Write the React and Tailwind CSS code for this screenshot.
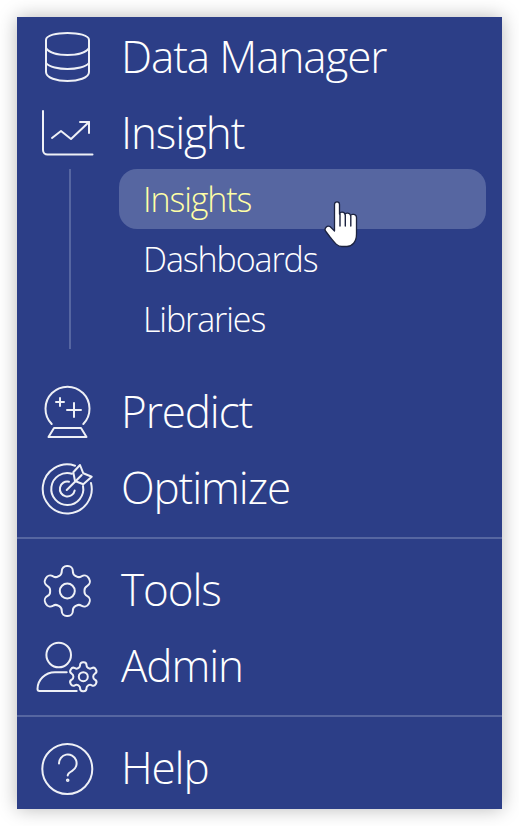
const gearPath = "M12.22 2h-.44a2 2 0 0 0-2 2v.18a2 2 0 0 1-1 1.73l-.43.25a2 2 0 0 1-2 0l-.15-.08a2 2 0 0 0-2.73.73l-.22.38a2 2 0 0 0 .73 2.73l.15.1a2 2 0 0 1 1 1.72v.51a2 2 0 0 1-1 1.74l-.15.09a2 2 0 0 0-.73 2.73l.22.38a2 2 0 0 0 2.73.73l.15-.08a2 2 0 0 1 2 0l.43.25a2 2 0 0 1 1 1.73V20a2 2 0 0 0 2 2h.44a2 2 0 0 0 2-2v-.18a2 2 0 0 1 1-1.73l.43-.25a2 2 0 0 1 2 0l.15.08a2 2 0 0 0 2.73-.73l.22-.39a2 2 0 0 0-.73-2.73l-.15-.08a2 2 0 0 1-1-1.74v-.5a2 2 0 0 1 1-1.74l.15-.09a2 2 0 0 0 .73-2.73l-.22-.38a2 2 0 0 0-2.73-.73l-.15.08a2 2 0 0 1-2 0l-.43-.25a2 2 0 0 1-1-1.73V4a2 2 0 0 0-2-2z";

function Icon({ children }) {
  return (
    <svg
      viewBox="0 0 70 60"
      className="w-[70px] h-[60px] ml-[18px] shrink-0"
      fill="none"
      stroke="#eef0f6"
      strokeWidth="2"
      strokeLinecap="round"
      strokeLinejoin="round"
    >
      {children}
    </svg>
  );
}

const DataIcon = () => (
  <Icon>
    <path d="M11 13C11 8 22 6 32.500 6S54 8 54 13V45C54 51 43 54 32.500 54S11 51 11 45Z" />
    <path d="M11 21C14 26 24 28 32.500 28S51 26 54 21" />
    <path d="M11 36C14 40 24 42 32.500 42S51 40 54 36" />
  </Icon>
);

const InsightIcon = () => (
  <Icon>
    <path d="M8 8V47a4.500 4.500 0 0 0 4.500 4.500H57.500" />
    <path d="M17 35L26 28L36 36L54 19" />
    <path d="M45 19H54V30" />
  </Icon>
);

const PredictIcon = () => (
  <Icon>
    <path d="M16.700 42A22 22 0 1 1 48.300 42" />
    <path d="M19 46H46L51.500 55H13.500Z" />
    <path d="M25 16V24M21 20H29" />
    <path d="M39 21V35M32 28H46" />
  </Icon>
);

const OptimizeIcon = () => (
  <Icon>
    <path d="M40 7.700A24.500 24.500 0 1 0 56 25" />
    <path d="M37 15.700A16 16 0 1 0 48 28" />
    <path d="M34 23.700A7.500 7.500 0 1 0 39.700 32.500" />
    <path d="M31.700 32L46.700 17" />
    <path d="M38.300 14.300L45 7L48.300 15.300L56.700 18.700L48.300 26.300L40 23Z" />
  </Icon>
);

const ToolsIcon = () => (
  <Icon>
    <g transform="translate(2.300 1) scale(2.500)">
      <path d={gearPath} strokeWidth="0.800" />
    </g>
    <circle cx="32.300" cy="31" r="7.500" />
  </Icon>
);

const AdminIcon = () => (
  <Icon>
    <circle cx="23.700" cy="19" r="12.300" />
    <path d="M31.700 36.300H20C10 36.300 2.500 44 2.500 53a2 2 0 0 0 2 2H41.700" />
    <g transform="translate(30.900 23.300) scale(1.450)">
      <path d={gearPath} strokeWidth="1.380" />
    </g>
    <circle cx="48.300" cy="40.700" r="4.500" />
  </Icon>
);

const HelpIcon = () => (
  <Icon>
    <circle cx="32.300" cy="31" r="25" />
    <path d="M24 25.500a8.800 8.800 0 1 1 13.200 7.400c-3 1.700-4.500 2.800-4.500 4.600" />
    <circle cx="32.700" cy="42.300" r="0.800" />
  </Icon>
);

function HandCursor() {
  return (
    <svg viewBox="0 0 36 50" className="absolute left-[307px] top-[183px] w-[36px] h-[50px]">
      <path
        d="M10.500 4.500C10.500 1 15.500 1 15.500 4.500V14C16 11.500 20.500 11.500 21 14.500C21.500 12.500 26 12.500 26.500 15.500C27.500 13.500 32.500 14 32.500 17.500V34C32.500 42 28 46.500 23 46.500H18C13 46.500 10 42 6 37L1.500 31C0 28.500 3 25 6 26.500L10.500 31Z"
        fill="#ffffff"
        stroke="#1c2340"
        strokeWidth="1.300"
        strokeLinejoin="round"
      />
      <path d="M16 14V26M21.300 15V26M26.800 16V26" stroke="#1c2340" strokeWidth="1.400" strokeLinecap="round" />
    </svg>
  );
}

function MenuRow({ icon, label }) {
  return (
    <div className="flex items-center h-[76px]">
      {icon}
      <span className="ml-[16px] -mt-[2px] text-[44px] tracking-[-1.1px] font-light text-white leading-none whitespace-nowrap">
        {label}
      </span>
    </div>
  );
}

function SubItem({ label, active }) {
  return (
    <div
      className={`flex items-center h-[60px] pl-[24px] rounded-[18px] text-[34px] tracking-[-1.1px] font-light ${
        active ? "bg-[#5666a1] text-[#ffffa6]" : "text-white"
      }`}
    >
      {label}
    </div>
  );
}

export default function App() {
  return (
    <div className="w-[519px] h-[826px] bg-white p-[17px] overflow-hidden font-['Open_Sans',sans-serif]">
      <div className="relative w-[485px] h-[792px] bg-[#2c3e87] pt-[2px] shadow-[0_0_18px_rgba(0,0,0,0.28)]">
        <MenuRow icon={<DataIcon />} label="Data Manager" />
        <MenuRow icon={<InsightIcon />} label="Insight" />
        <div className="-mt-[2px] ml-[52px] mr-[16px] pl-[48px] border-l-2 border-[#5666a1]">
          <SubItem label="Insights" active />
          <SubItem label="Dashboards" />
          <SubItem label="Libraries" />
        </div>
        <div className="mt-[25px]">
          <MenuRow icon={<PredictIcon />} label="Predict" />
          <MenuRow icon={<OptimizeIcon />} label="Optimize" />
        </div>
        <div className="mt-[11px] h-[2px] bg-[#5666a1]" />
        <div className="mt-[13px]">
          <MenuRow icon={<ToolsIcon />} label="Tools" />
          <MenuRow icon={<AdminIcon />} label="Admin" />
        </div>
        <div className="mt-[11px] h-[2px] bg-[#5666a1]" />
        <div className="mt-[13px]">
          <MenuRow icon={<HelpIcon />} label="Help" />
        </div>
        <HandCursor />
      </div>
    </div>
  );
}
